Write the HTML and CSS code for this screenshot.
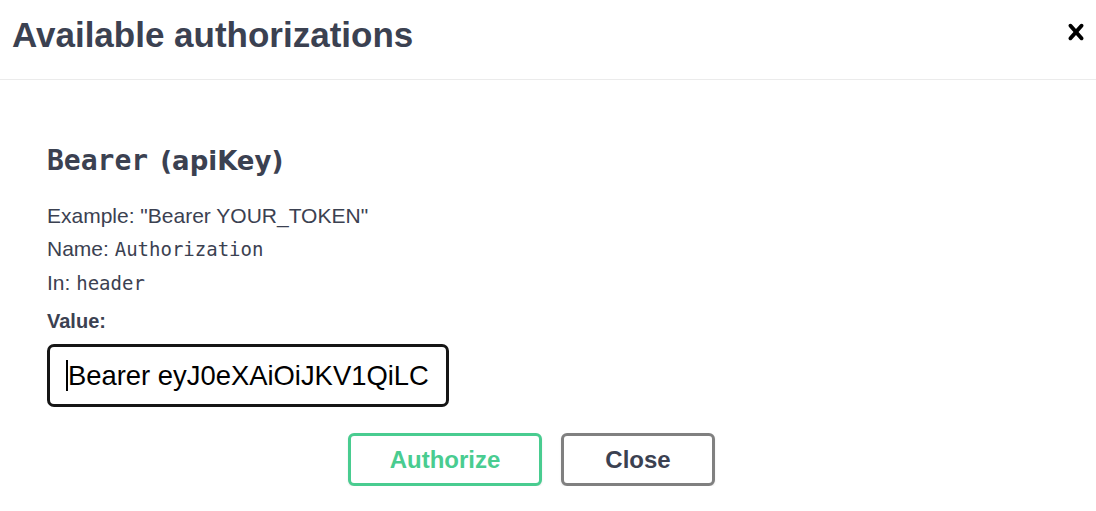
FILE: index.html
```html
<!DOCTYPE html>
<html lang="en">
<head>
<meta charset="utf-8">
<title>Available authorizations</title>
<link rel="stylesheet" href="styles.css">
</head>
<body>
<div class="modal">
  <div class="modal-header">
    <h3 class="modal-title">Available authorizations</h3>
    <button class="close-modal" aria-label="Close">
      <svg width="32" height="32" viewBox="0 0 20 20" aria-hidden="true"><path d="M14.348 14.849c-.469.469-1.229.469-1.697 0L10 11.819l-2.651 3.029c-.469.469-1.229.469-1.697 0-.469-.469-.469-1.229 0-1.697l2.758-3.150-2.759-3.152c-.469-.469-.469-1.228 0-1.697.469-.469 1.228-.469 1.697 0L10 8.183l2.651-3.031c.469-.469 1.228-.469 1.697 0 .469.469.469 1.229 0 1.697l-2.758 3.152 2.758 3.150c.469.469.469 1.229 0 1.698z"/></svg>
    </button>
  </div>
  <div class="modal-body">
    <div class="auth-container">
      <h4 class="auth-title"><code>Bearer</code>&nbsp;(apiKey)</h4>
      <div class="desc first">Example: "Bearer YOUR_TOKEN"</div>
      <div class="desc">Name: <code>Authorization</code></div>
      <div class="desc">In: <code>header</code></div>
      <label class="value-label" for="val">Value:</label>
      <span class="input-wrap">
        <input id="val" class="value-input" type="text" value="Bearer eyJ0eXAiOiJKV1QiLCJhbGciOiJIUzI1NiJ9">
      </span>
    </div>
    <div class="btn-wrapper">
      <button class="btn btn-auth">Authorize</button>
      <button class="btn btn-close">Close</button>
    </div>
  </div>
</div>
</body>
</html>
```

FILE: styles.css
```css
html, body {
  margin: 0;
  padding: 0;
  background: #ffffff;
}

body {
  font-family: "Liberation Sans", Arial, sans-serif;
  color: #3b4151;
}

.modal-header {
  box-sizing: border-box;
  height: 80px;
  display: flex;
  justify-content: space-between;
  align-items: flex-start;
  padding: 0 4px 0 12px;
  border-bottom: 1px solid #ebebeb;
}

.modal-title {
  margin: 18px 0 0 0;
  font-size: 35px;
  line-height: 34px;
  font-weight: 700;
  color: #3b4151;
}

.close-modal {
  margin-top: 16px;
  padding: 0;
  border: 0;
  background: none;
  width: 32px;
  height: 32px;
  display: flex;
}

.close-modal svg {
  fill: #000000;
}

.auth-container {
  padding: 66px 0 0 47px;
}

.auth-title {
  margin: 0;
  font-family: "DejaVu Sans", sans-serif;
  font-size: 26px;
  line-height: 30px;
  font-weight: 700;
  color: #3b4151;
}

.auth-title code {
  font-family: "DejaVu Sans Mono", monospace;
  font-size: 28px;
  margin-right: 3px;
}

.desc {
  font-family: "Liberation Sans", Arial, sans-serif;
  font-size: 21px;
  line-height: 33px;
  color: #3b4151;
}

.desc.first {
  margin-top: 23px;
}

.desc code {
  font-family: "DejaVu Sans Mono", monospace;
  font-size: 19px;
}

.value-label {
  display: block;
  margin-top: 10px;
  font-size: 20px;
  line-height: 22px;
  font-weight: 700;
  color: #3b4151;
}

.input-wrap {
  position: relative;
  display: block;
  width: 402px;
  margin-top: 12px;
}

.input-wrap::after {
  content: "";
  position: absolute;
  left: 19px;
  top: 16px;
  width: 2px;
  height: 31px;
  background: #000000;
}

.value-input {
  display: block;
  box-sizing: border-box;
  width: 402px;
  height: 63px;
  padding: 0 17px 0 18px;
  border: 3px solid #161616;
  border-radius: 7px;
  font-family: "Liberation Sans", Arial, sans-serif;
  font-size: 27.4px;
  color: #000000;
  background: #ffffff;
  outline: none;
}

.btn-wrapper {
  display: flex;
  justify-content: center;
  gap: 19px;
  margin-top: 26px;
  padding-right: 33px;
}

.btn {
  box-sizing: border-box;
  height: 53px;
  border-radius: 6px;
  background: #ffffff;
  font-family: "Liberation Sans", Arial, sans-serif;
  font-size: 24px;
  font-weight: 700;
  box-shadow: 0 1px 2px rgba(0, 0, 0, 0.1);
  padding: 0;
}

.btn-auth {
  width: 194px;
  border: 3px solid #49cc90;
  color: #49cc90;
}

.btn-close {
  width: 154px;
  border: 3px solid #808080;
  color: #3b4151;
}
```
